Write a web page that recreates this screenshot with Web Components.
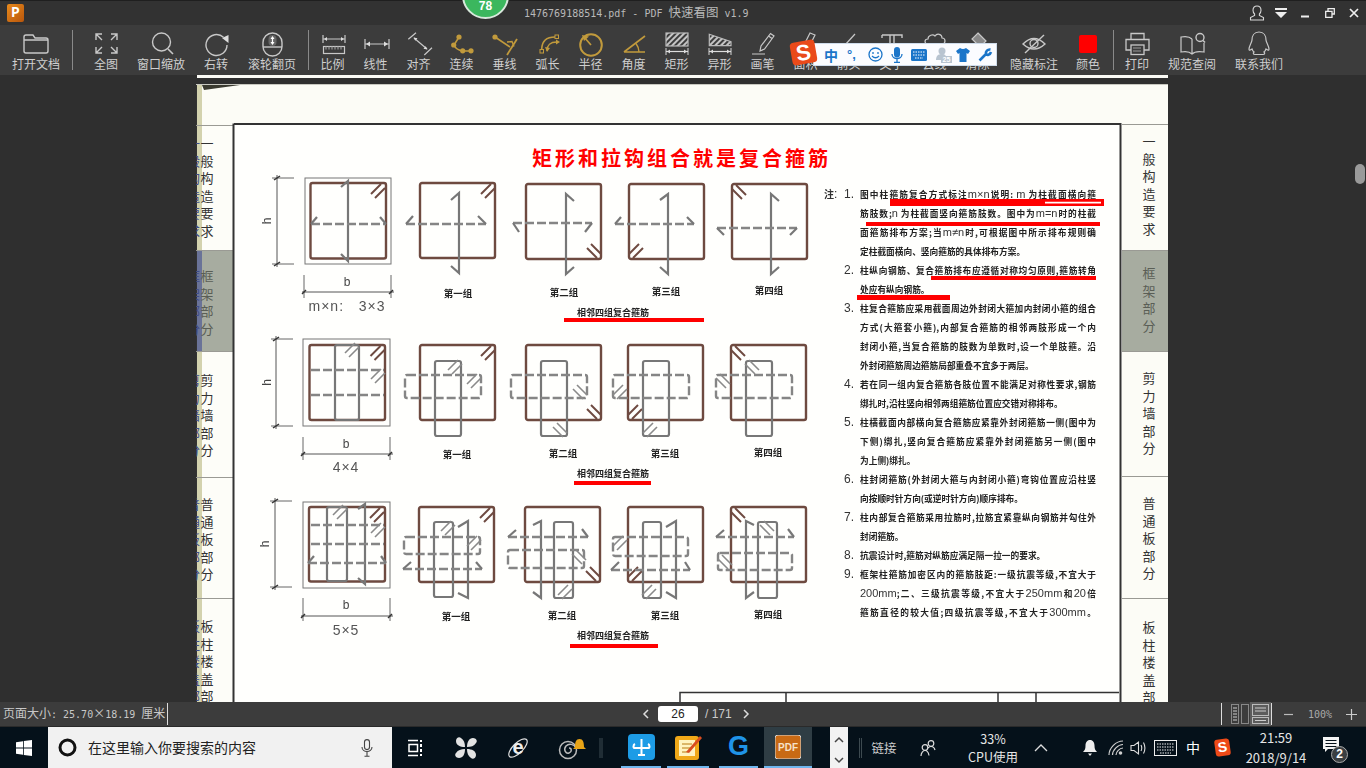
<!DOCTYPE html>
<html lang="zh"><head><meta charset="utf-8"><title>PDF 快速看图</title>
<style>html,body{margin:0;padding:0;background:#2f2f2f;overflow:hidden;font-family:"Noto Sans CJK SC","Liberation Sans",sans-serif}</style>
</head><body>
<x-app>
  <x-titlebar></x-titlebar>
  <x-toolbar></x-toolbar>
  <x-viewer>
    <x-page>
      <x-tabs slot="left" side="left"></x-tabs>
      <x-notes></x-notes>
      <x-tabs slot="right" side="right"></x-tabs>
      <x-drawing slot="over"></x-drawing>
    </x-page>
  </x-viewer>
  <x-statusbar></x-statusbar>
  <x-taskbar></x-taskbar>
  <x-ime slot="over"></x-ime>
  <x-badge slot="over">78</x-badge>
</x-app>
<script>
const CJK='"Noto Sans CJK SC","Liberation Sans",sans-serif';
function def(name,css,html,init){
  customElements.define(name,class extends HTMLElement{
    constructor(){super();this.attachShadow({mode:'open'}).innerHTML=`<style>${css}</style>${typeof html==='function'?html(this):html}`;}
    connectedCallback(){if(init)init(this);}
  });
}
/* generic box with fixed width, centres what it is given */
def('x-cell',`:host{display:flex;align-items:center;justify-content:center;flex:none;box-sizing:border-box;height:100%;color:#e6e6e6}`,`<slot></slot>`,
  el=>{el.style.width=el.getAttribute('w')+'px';if(el.hasAttribute('ml'))el.style.marginLeft=el.getAttribute('ml')+'px';
       if(el.hasAttribute('on'))el.style.borderBottom='2px solid #6fb6ee';if(el.hasAttribute('bg'))el.style.background=el.getAttribute('bg');});

def('x-app',`:host{display:flex;flex-direction:column;width:1366px;height:768px;position:relative;overflow:hidden;background:#2f2f2f}`,`<slot></slot><slot name="over"></slot>`);

def('x-badge',`:host{position:absolute;left:462px;top:-28px;width:47px;height:47px;box-sizing:border-box;border-radius:50%;background:#3bb75e;border:2px solid #d8e8dc;color:#fff;font:700 12px/1 "Liberation Sans",sans-serif;display:flex;align-items:flex-end;justify-content:center;padding-bottom:5px}`,`<slot></slot>`);

/* title bar */
def('x-titlebar',`
:host{display:flex;align-items:center;height:25px;flex:none;background:#323232;border-top:1px solid #1f1f1f;box-sizing:border-box;position:relative}
.logo{width:17px;height:18px;margin-left:7px;border-radius:2px;background:linear-gradient(135deg,#e88a1c,#b8560c);color:#fff;font:700 14px/18px "Liberation Mono",monospace;text-align:center}
.t{margin-left:500px;width:300px;color:#b9b9b9;font:10px/25px "DejaVu Sans Mono",monospace;white-space:pre}
.t b{font:400 12.500px ${CJK}}
.c{margin-left:auto;display:flex;height:24px}
`,`<div class="logo">P</div>
<div class="t">1476769188514.pdf - PDF <b>快速看图</b> v1.9</div>
<div class="c">
<x-cell w="24"><svg width="16" height="16" viewBox="0 0 16 16" fill="none" stroke="#d8d8d8" stroke-width="1.1"><path d="M8 1c-2.6 0-4 1.8-4 4.2 0 1.8.8 3 1.6 3.8v1.4L1.5 12.6V15h13v-2.4l-4.1-2.2V9c.8-.8 1.6-2 1.6-3.8C12 2.8 10.600 1 8 1z"/></svg></x-cell>
<x-cell w="24"><svg width="12" height="12" viewBox="0 0 12 12"><path d="M0 1h12v2H0zM0 5h12L6 11z" fill="#eee"/></svg></x-cell>
<x-cell w="24"><svg width="10" height="10" viewBox="0 0 10 10"><path d="M1 7.500h8v2H1z" fill="#eee"/></svg></x-cell>
<x-cell w="25"><svg width="10" height="10" viewBox="0 0 10 10" fill="none" stroke="#eee" stroke-width="1.300"><path d="M3 3V.700h6.300V6H7"/><path d="M.700 3.300H7v6H.700z"/></svg></x-cell>
<x-cell w="23"><svg width="10" height="10" viewBox="0 0 10 10" stroke="#eee" stroke-width="1.700"><path d="M1 1l8 8M9 1L1 9"/></svg></x-cell>
<div style="width:1px"></div>
</div>`);

/* toolbar */
def('x-tool',`
:host{display:flex;flex-direction:column;align-items:center;flex:none;height:50px;box-sizing:border-box;padding-top:4px;overflow:visible}
::slotted(svg){display:block;width:36px;height:28px;flex:none}
.l{font:12px/16px ${CJK};color:#cfcfcf;white-space:nowrap;margin-top:-1px}
`,`<slot name="icon"></slot><div class="l"><slot></slot></div>`,
el=>{el.style.width=el.getAttribute('w')+'px';});
def('x-sep',`:host{display:block;flex:none;width:1px;height:40px;margin-top:5px;background:#8a8a8a}`,``);

const G='#c19a3c',W='#c8c8c8';
const svg=(b,c=W,w=1.2)=>`<svg slot="icon" viewBox="0 0 36 28" fill="none" stroke="${c}" stroke-width="${w}">${b}</svg>`;
const hatch=`<defs><pattern id="h" width="4" height="4" patternUnits="userSpaceOnUse" patternTransform="rotate(-45)"><rect width="4" height="1.400" fill="#8c8c8c"/></pattern></defs>`;
const dimBar=`<path d="M7 19v7M29 19v7" stroke="#bbb"/><path d="M7 22.500h22" stroke="#ddd"/><path d="M8 22.500l3-2v4zM28 22.500l-3-2v4z" fill="#ddd" stroke="none"/>`;
const TOOLS=[
[72,'打开文档',svg(`<path d="M6 11V8q0-2 2-2h7l2 3h11q2 0 2 2v11q0 2-2 2H8q-2 0-2-2V11h24" stroke-width="1.400"/>`)],
'sep',
[66,'全图',svg(`<g stroke-width="1.400"><path d="M8 11V5h6M8 5l6 6M29 11V5h-6M29 5l-6 6M8 18v6h6M8 24l6-6M29 18v6h-6M29 24l-6-6"/></g>`)],
[44,'窗口缩放',svg(`<circle cx="18.500" cy="13" r="9" stroke-width="1.400"/><path d="M25 20l5 5" stroke-width="1.600"/>`)],
[66,'右转',svg(`<path d="M25.500 8.200A10.500 10.500 0 1 0 29 16" stroke-width="1.400"/><path d="M24 9l6.500-3v8z" fill="#ddd" stroke="none"/>`)],
[46,'滚轮翻页',svg(`<rect x="9" y="4" width="19" height="23" rx="9.500" stroke-width="1.400"/><path d="M9 18h19" stroke-width="1.400"/><rect x="14.500" y="6" width="8" height="11" rx="4" fill="#666" stroke="none"/><path d="M18.500 8v7" stroke="#fff"/><path d="M16.500 10l2-3 2 3zM16.500 13l2 3 2-3z" fill="#fff" stroke="none"/>`)],
'gap13','sep','gap2',
[43,'比例',svg(`<path d="M8 6v8M30 6v8M8 10h22"/><path d="M9 10l3-2v4zM29 10l-3-2v4z" fill="#ddd" stroke="none"/><rect x="8.500" y="17.500" width="21" height="7" stroke-width="1.200"/><path d="M11 17.500v3M14 17.500v3M17 17.500v3M20 17.500v3M23 17.500v3M26 17.500v3" stroke="#999"/>`)],
[43,'线性',svg(`<path d="M7 10v10M31 10v10M7 15h24"/><path d="M8 15l4-2.500v5zM30 15l-4-2.500v5z" fill="#ddd" stroke="none"/>`)],
[43,'对齐',svg(`<path d="M7.300 10.300L15 3.700M23.300 26l7.700-7.300M13 9l13 11"/><path d="M12.500 8.500l4 .8-2.200 2.500zM26.500 20.500l-4-.8 2.200-2.500z" fill="#ddd" stroke="none"/>`)],
[43,'连续',svg(`<path d="M15 8l-5 8q2 5 9 6h8" stroke-width="1.600"/><g fill="${G}" stroke="none"><circle cx="15" cy="8" r="2.600"/><circle cx="9.700" cy="16" r="2.600"/><circle cx="18.700" cy="21.800" r="2.600"/><circle cx="27" cy="21.800" r="2.600"/></g>`,G)],
[43,'垂线',svg(`<path d="M30 10L20 26" stroke-width="1.800"/><path d="M8 8l15 10" stroke-width="1.600"/><path d="M20 13l5-.5 2 5" stroke-width="1.400"/><circle cx="8" cy="8" r="2.600" fill="${G}" stroke="none"/>`,G)],
[43,'弧长',svg(`<path d="M11.700 20C12 11 18 8 25 8" stroke-width="1.600"/><path d="M17 22c0-6 3-9 10-9" stroke-width="1.300"/><path d="M15 18l2 5 3-4zM26 10.500l4 2.500-4 2.500z" fill="${G}" stroke="none"/><rect x="10" y="20.500" width="3.500" height="3.500" stroke-width="1"/><rect x="25" y="6" width="3.500" height="3.500" stroke-width="1"/>`,G)],
[43,'半径',svg(`<circle cx="18" cy="16" r="10.800" stroke-width="2"/><path d="M18 16l-7-8" stroke-width="1.600"/><path d="M9 6l7 1.500-5 4.500z" fill="${G}" stroke="none"/>`,G)],
[43,'角度',svg(`<path d="M8 23h21M8 23L29 7" stroke-width="1.600"/><path d="M20 14.500q3 4 3 8.500" stroke-width="1.400"/>`,G)],
[43,'矩形',svg(`${hatch}<rect x="7" y="4" width="22" height="13" fill="url(#h)" stroke="#bbb"/>${dimBar}`)],
[43,'异形',svg(`<path d="M7.300 5.300L29 12.700v4H7.300z" fill="url(#h2)" stroke="#bbb"/><defs><pattern id="h2" width="4" height="4" patternUnits="userSpaceOnUse" patternTransform="rotate(-45)"><rect width="4" height="1.400" fill="#8c8c8c"/></pattern></defs>${dimBar}`)],
[43,'画笔',svg(`<path d="M7 25h13M15 22l1-5L25.500 4.500l3.500 2.500-9.500 13z"/><path d="M23.500 7l3.500 2.500"/>`)],
[43,'面积',svg(`<path d="M16 16L22 4l5 2-6 12z"/>`)],
[43,'箭头',svg(`<path d="M14 16L24 5"/>`)],
[43,'文字',svg(`<path d="M8 6h20v3M8 6v3M16 6v12M20 6v12" stroke-width="1.400"/>`)],
[43,'云线',svg(`<path d="M11 15c-4 0-4-5 0-5 0-4 5-5 7-3 2-3 7-2 7 2 4 0 4 6 0 6z"/>`)],
[43,'清除',svg(`<path d="M18 4l8 8-6 6-8-8z" fill="#888"/>`)],
'gap1',
[68,'隐藏标注',svg(`<path d="M7 15q11-11 22 0-11 10-22 0z" stroke-width="1.400"/><circle cx="18" cy="14.500" r="4" stroke-width="1.400"/><path d="M28 6L9 24" stroke-width="1.400"/>`)],
[40,'颜色',svg(`<rect x="9" y="6" width="18" height="18" rx="2" fill="#f00" stroke="none"/>`)],
'gap5','sep',
[46,'打印',svg(`<path d="M12 10V4.500h13V10M12 21H7V10.500h23V21h-5" stroke-width="1.300"/><rect x="12" y="16" width="13" height="9.500" stroke-width="1.300"/><path d="M14 19h8M14 22h8" stroke="#999"/>`)],
[64,'规范查阅',svg(`<path d="M18 10c-2-2-6-3-11-2v15c5-1 9 0 11 2 2-2 6-3 12-2V14M18 10v15" stroke-width="1.200"/><circle cx="26" cy="8.500" r="4" stroke-width="1.400"/><path d="M29 11.500l2 2" stroke-width="1.600"/>`)],
[70,'联系我们',svg(`<path d="M18 3c-5 0-7 4-7 8 0 2-3 6-3 9 0 2 1.500 1 3 0 .5 1.500 1 2.500 2 3-1 1-1 2.500 1 2.500h8c2 0 2-1.500 1-2.500 1-.5 1.500-1.500 2-3 1.500 1 3 2 3 0 0-3-3-7-3-9 0-4-2-8-7-8z" stroke-width="1.200"/>`)]
];
def('x-toolbar',`:host{display:flex;flex:none;height:50px;background:#3c3c3c}
.g{flex:none}`,
TOOLS.map(t=>t==='sep'?'<x-sep></x-sep>':typeof t==='string'?`<div class="g" style="width:${t.slice(3)}px"></div>`:`<x-tool w="${t[0]}">${t[2]}${t[1]}</x-tool>`).join(''));

/* viewer */
def('x-viewer',`
:host{display:block;flex:none;height:627px;position:relative;overflow:hidden;background:#2f2f2f;padding-left:196px;box-sizing:border-box}
.strip{height:3px;margin:0 0 6px 1px;width:971px;background:#fbfbf6}
.sb{position:absolute;right:1px;top:89px;width:10px;height:20px;border-radius:5px;background:#9a9a9a}
`,`<div class="strip"></div><slot></slot><div class="sb"></div>`);

def('x-page',`
:host{display:flex;position:relative;width:972px;height:618px;overflow:hidden;background:#fcfcf6}
.mid{flex:none;width:889px;background:linear-gradient(#fcfcf6 40px,#fffffd 40px)}
.l{flex:none;width:37px;background:linear-gradient(90deg,#333 0 1px,#d3d2ae 1px 6px,transparent 6px)}
.r{flex:none;width:46px}
.o{position:absolute;inset:0;z-index:2;pointer-events:none}
`,`<div class="l"><slot name="left"></slot></div><div class="mid"><slot></slot></div><div class="r"><slot name="right"></slot></div><div class="o"><slot name="over"></slot></div>`);

const TABS={
 right:[[40,126,10,'一般构造要求'],[0,101,16,'框架部分',1],[0,125,20,'剪力墙部分'],[0,122,19.500,'普通板部分'],[0,110,21.500,'板柱楼盖部']],
 left:[[41,125,10.500,'一般构造要求'],[0,101,18.500,'框架部分',1],[0,126,21.500,'剪力墙部分'],[0,121,19.500,'普通板部分'],[0,110,20.500,'板柱楼盖部']]
};
def('x-tab',`
:host{display:block;position:relative;box-sizing:border-box;overflow:hidden;border-top:1px solid #9a9a94;font:13px/13px ${CJK};color:#333}
.t{writing-mode:vertical-rl;letter-spacing:4.500px;white-space:nowrap;display:block;position:relative}
.g{position:absolute;left:-9px;color:#3e4b85}
`,`<span class="g" part="g"></span><span class="t"><slot></slot></span>`);
customElements.define('x-tabs',class extends HTMLElement{
  constructor(){super();this.attachShadow({mode:'open'});}
  connectedCallback(){
    const side=this.getAttribute('side');
    const s=document.createElement('style');
    s.textContent=`:host{display:block;width:100%}
    x-tab.g{background:#a7aca0;color:#5a5e56}
    x-tab.lf{background:linear-gradient(90deg,#333 0 1px,#d3d2ae 1px 6px,#fdfdf8 6px)}
    x-tab.lf.g{background:linear-gradient(90deg,#333 0 1px,#6a7398 1px 6px,#a7aca0 6px)}`;
    this.shadowRoot.append(s);
    TABS[side].forEach(([mt,h,pad,txt,grey])=>{
      const t=document.createElement('x-tab');
      t.textContent=txt;
      t.style.height=h+'px';
      if(mt)t.style.marginTop=mt+'px';
      if(grey)t.classList.add('g');
      if(side==='left')t.classList.add('lf');
      const inner=t.shadowRoot.querySelector('.t');
      inner.style.paddingTop=pad+'px';
      if(side==='left'){
        inner.style.paddingLeft='4.500px';
        const g=t.shadowRoot.querySelector('.g');g.textContent=txt;g.style.top=pad+'px';
        g.style.writingMode='vertical-rl';g.style.letterSpacing='4.500px';g.style.whiteSpace='nowrap';
      }else{
        inner.style.paddingLeft='20.500px';
        t.shadowRoot.querySelector('.g').remove();
      }
      this.shadowRoot.append(t);
    });
  }
});

/* notes */
const NOTES=[
['1.',['图中柱箍筋复合方式标注m×n说明:   m 为柱截面横向箍','筋肢数;n 为柱截面竖向箍筋肢数。图中为m=n时的柱截','面箍筋排布方案;当m≠n时,可根据图中所示排布规则确','定柱截面横向、竖向箍筋的具体排布方案。']],
['2.',['柱纵向钢筋、复合箍筋排布应遵循对称均匀原则,箍筋转角','处应有纵向钢筋。']],
['3.',['柱复合箍筋应采用截面周边外封闭大箍加内封闭小箍的组合','方式(大箍套小箍),内部复合箍筋的相邻两肢形成一个内','封闭小箍,当复合箍筋的肢数为单数时,设一个单肢箍。沿','外封闭箍筋周边箍筋局部重叠不宜多于两层。']],
['4.',['若在同一组内复合箍筋各肢位置不能满足对称性要求,钢筋','绑扎时,沿柱竖向相邻两组箍筋位置应交错对称排布。']],
['5.',['柱横截面内部横向复合箍筋应紧靠外封闭箍筋一侧(图中为','下侧)绑扎,竖向复合箍筋应紧靠外封闭箍筋另一侧(图中','为上侧)绑扎。']],
['6.',['柱封闭箍筋(外封闭大箍与内封闭小箍)弯钩位置应沿柱竖','向按顺时针方向(或逆时针方向)顺序排布。']],
['7.',['柱内部复合箍筋采用拉筋时,拉筋宜紧靠纵向钢筋并勾住外','封闭箍筋。']],
['8.',['抗震设计时,箍筋对纵筋应满足隔一拉一的要求。']],
['9.',['框架柱箍筋加密区内的箍筋肢距:一级抗震等级,不宜大于','200mm;二、三级抗震等级,不宜大于250mm和20倍','箍筋直径的较大值;四级抗震等级,不宜大于300mm。']]
];
const lat=s=>s.replace(/[A-Za-z0-9=≠×]+/g,m=>`<i>${m}</i>`);
def('x-notes',`
:host{display:block;margin:100.500px 0 0 591px;width:272px;font:700 8.700px/19px ${CJK};color:#222;filter:blur(.25px)}
.n{display:grid;grid-template-columns:36px 236px}
.k{font:12px/19px "Liberation Sans",sans-serif;color:#333;text-align:right;padding-right:6px;white-space:pre}
.k b{font:700 10px ${CJK};}
.ln{height:19px;text-align:justify;text-align-last:justify;white-space:normal}
.ln.e{text-align-last:left}
i{font:400 11px "Liberation Sans",sans-serif;color:#333}
`,NOTES.map((n,ni)=>`<div class="n"><div class="k">${ni===0?'<b>注</b>:  ':''}${n[0]}</div><div>${n[1].map((l,i)=>{const last=i===n[1].length-1&&ni!==8;return `<div class="ln${last?' e':''}">${lat(l)}</div>`}).join('')}</div></div>`).join(''));

/* the scanned drawing: a free canvas in page coordinates */
const BR='#6e4a40',GY='#777',DS='#858585';
const line=(x1,y1,x2,y2,c='#555',w=1)=>`<path d="M${x1} ${y1}L${x2} ${y2}" stroke="${c}" stroke-width="${w}" fill="none"/>`;
const dbl=(cx,cy,slash,c=BR,w=2)=>{const d=slash==='/'?[1,-1]:[1,1],n=slash==='/'?[1,1]:[1,-1],l=5,o=2;
  return [1,-1].map(s=>line(cx-d[0]*l+n[0]*o*s,cy-d[1]*l+n[1]*o*s,cx+d[0]*l+n[0]*o*s,cy+d[1]*l+n[1]*o*s,c,w)).join('');};
const corner=w=>({TR:dbl(68,8,'/'),TL:dbl(7,8,'\\'),BR:dbl(68,67,'\\'),BL:dbl(7,67,'/')}[w]);
const vTie=(x,t,b,h1,h2)=>`<path d="M${h1} L${x} ${t} L${x} ${b} L${h2}" fill="none" stroke="${GY}" stroke-width="2.200"/>`;
const hTie=(y,l,r,h1,h2)=>`<path d="M${l} ${y}L${r} ${y}" fill="none" stroke="${DS}" stroke-width="2.600" stroke-dasharray="9 3"/>`+line(l,y,h1[0],h1[1],GY,2.200)+line(r,y,h2[0],h2[1],GY,2.200);
const vRect=(x,y,w,h)=>`<rect x="${x}" y="${y}" width="${w}" height="${h}" rx="2" fill="none" stroke="${GY}" stroke-width="2.200"/>`;
const dRect=(x,y,w,h)=>`<rect x="${x}" y="${y}" width="${w}" height="${h}" rx="2" fill="none" stroke="${DS}" stroke-width="2.400" stroke-dasharray="9 3"/>`;
const lh=(x,y,s)=>dbl(x,y,s,'#8a8a8a',1.600);
const sq=(ox,oy,c,body)=>`<g transform="translate(${ox} ${oy})"><rect width="75" height="75" rx="2" fill="none" stroke="${BR}" stroke-width="2.400"/>${corner(c)}${body}</g>`;
const lbl=(x,y,t,fs=9.500)=>`<text x="${x}" y="${y}" text-anchor="middle" dominant-baseline="central" font-size="${fs}" font-weight="700" fill="#222" font-family='"Noto Sans CJK SC",sans-serif'>${t}</text>`;
const dim=(vx,t,b,ox0,ox1,hy,by0,by1,hx,bx,byt,by,big,bigY)=>
  line(vx,t-3,vx,b+3)+line(vx-5,t,vx+17,t,'#666')+line(vx-5,b,vx+17,b,'#666')+line(vx-3,t+2,vx+3,t-2,'#333',1.500)+line(vx-3,b+2,vx+3,b-2,'#333',1.500)
  +line(ox0-2,hy,ox1+3,hy)+line(ox0,by0,ox0,by1,'#666')+line(ox1,by0,ox1,by1,'#666')+line(ox0-2,hy+2,ox0+2,hy-2,'#333',1.500)+line(ox1-2,hy+2,ox1+2,hy-2,'#333',1.500)
  +`<text x="${hx}" y="${(t+b)/2}" text-anchor="middle" dominant-baseline="central" transform="rotate(-90 ${hx} ${(t+b)/2})" font-size="12" fill="#444" font-family="Liberation Sans">h</text>`
  +`<text x="${bx}" y="${byt}" text-anchor="middle" dominant-baseline="central" font-size="12" fill="#444" font-family="Liberation Sans">b</text>`
  +`<text x="${bx}" y="${bigY}" text-anchor="middle" dominant-baseline="central" font-size="14" letter-spacing="1" fill="#555" font-family='"Liberation Sans","Noto Sans CJK SC",sans-serif'>${big}</text>`;

const row1=
  sq(420,183,'TR',vTie(39,10,90,'31 17','31 83')+hTie(41,-14,66,[-7,33],[58,33]))+
  sq(526,184,'BR',vTie(40,10,90,'48 17','48 83')+hTie(39,-13,66,[-7,48],[59,48]))+
  sq(629,184,'BL',vTie(39,10,90,'31 16','31 83')+hTie(40,-14,65,[-8,33],[58,33]))+
  sq(732,184,'TL',vTie(39,10,90,'47 17','47 83')+hTie(44,-15,65,[-8,51],[58,51]));
const r2=(x,c,hk)=>sq(x,345,c,vRect(15,16,26,75)+dRect(-15,30,76,23)+hk);
const row2=
  r2(420,'TR',lh(35,22,'/')+lh(54,36,'/'))+
  r2(526,'BR',lh(34,85,'\\')+lh(54,47,'\\'))+
  r2(628,'BL',lh(22,85,'/')+lh(-8,47,'/'))+
  r2(731,'TL',lh(21,22,'\\')+lh(-8,36,'\\'));
const row3=
  sq(419,507,'TR',vRect(15,15,19,75)+vTie(49,14,91,'39 20','39 86')+dRect(-15,30,76,17)+hTie(62,-16,63,[-8,55],[57,55])+lh(29,21,'/')+lh(55,36,'/'))+
  sq(525,507,'BR',vTie(16,14,91,'8 18','8 85')+vRect(29,15,19,76)+hTie(30,-17,63,[-9,23],[57,22])+dRect(-17,43,76,18)+lh(54,50,'\\')+lh(40,85,'/'))+
  sq(628,507,'BL',vRect(15,15,18,76)+vTie(48,14,91,'38 20','38 85')+dRect(-15,30,75,19)+hTie(63,-17,62,[-9,55],[57,55])+lh(-8,36,'/')+lh(21,85,'/'))+
  sq(731,507,'TL',vTie(15,14,91,'23 18','23 85')+vRect(27,15,19,76)+hTie(30,-15,63,[-7,23],[57,22])+dRect(-13,46,74,17)+lh(-6,55,'\\')+lh(36,21,'\\'));
const mains=
  `<rect x="305" y="178" width="86" height="86" fill="none" stroke="#777"/>`+
  `<rect x="310.500" y="183" width="75.500" height="75.500" rx="2" fill="none" stroke="${BR}" stroke-width="2.400"/>`+
  `<g transform="translate(310 183)">${corner('TR')}</g>`+
  vTie(348,181,261,'341 187','341 254')+hTie(224,311,386,[317,217],[380,217])+
  `<rect x="303" y="339" width="87" height="87" fill="none" stroke="#777"/>`+
  `<rect x="309.500" y="345" width="75.500" height="75" rx="2" fill="none" stroke="${BR}" stroke-width="2.400"/>`+
  `<g transform="translate(309.500 345)">${corner('TR')}</g>`+
  vRect(335,345,24,75)+hTie(370,311,384,[311,370],[384,370])+hTie(395,311,384,[311,395],[384,395])+lh(352,350,'/')+lh(378,376,'/')+
  `<rect x="303" y="502" width="87" height="86" fill="none" stroke="#777"/>`+
  `<rect x="309" y="507" width="76" height="74.500" rx="2" fill="none" stroke="${BR}" stroke-width="2.400"/>`+
  `<g transform="translate(309 507)">${corner('TR')}</g>`+
  vRect(327,507,20,74)+vTie(365,504,584,'358 509','358 578')+hTie(525,311,384,[311,525],[384,525])+hTie(544,311,384,[311,544],[384,544])+hTie(563,308,386,[314,556],[381,556])+lh(340,512,'/')+lh(378,530,'/');
const REDS=[[564,318,140,4],[574,481,77,4],[570,644,88,4],[866,222,234,4],[931,276,165,4],[857,295,93,5]];
def('x-drawing',`:host{display:block;position:absolute;inset:0}svg{display:block;width:972px;height:618px}.b{filter:blur(.4px)}`,
`<svg viewBox="196 84 972 618">
<g class="b">
<path d="M202 85L240 85L204 90z" fill="#3a3a30"/><path d="M196 84.500H1168" stroke="#c8c8c0"/>
<path d="M234 124H1121.500M233.500 123.500V702M1120.500 124V702" fill="none" stroke="#333" stroke-width="2"/>
<path d="M680 702V692.500H1119M786 692V702M998 692V702M1036 692V702" fill="none" stroke="#333" stroke-width="1.500"/>
${row1}${row2}${row3}${mains}
${dim(277,178,264,304,391,292,275,298,267,347,282,0,'m×n:&#160;&#160;&#160;3×3',306)}
${dim(276,339,426,303,390,454,437,460,267,346,444,0,'4×4',467)}
${dim(275,501,587,303,390,616,598,621,265,346,605,0,'5×5',630)}
${lbl(458,293,'第一组')}${lbl(564,292,'第二组')}${lbl(666,291,'第三组')}${lbl(769,290,'第四组')}
${lbl(457,454,'第一组')}${lbl(563,453,'第二组')}${lbl(665,453,'第三组')}${lbl(768,452,'第四组')}
${lbl(456,616,'第一组')}${lbl(562,615,'第二组')}${lbl(665,615,'第三组')}${lbl(768,614,'第四组')}
${lbl(613,312,'相邻四组复合箍筋',9)}${lbl(613,473,'相邻四组复合箍筋',9)}${lbl(613,635,'相邻四组复合箍筋',9)}
</g>
<text x="532" y="157" dominant-baseline="central" font-size="20" font-weight="700" letter-spacing="3" fill="#f00" font-family='"Noto Sans CJK SC",sans-serif'>矩形和拉钩组合就是复合箍筋</text>
<path d="M890 199h214v7H890zM1045 201.800v1.800h56v-1.800z" fill="#f00" fill-rule="evenodd"/>
${REDS.map(r=>`<rect x="${r[0]}" y="${r[1]}" width="${r[2]}" height="${r[3]}" fill="#f00"/>`).join('')}
</svg>`);

/* status bar */
def('x-statusbar',`
:host{display:flex;flex:none;height:25px;background:#3c3c3c;color:#c8c8c8;font:10px/25px "DejaVu Sans Mono",monospace;white-space:pre;align-items:center;overflow:hidden;border-bottom:1px solid #2a2a2a;box-sizing:border-box}
b{font:400 12px ${CJK}}
.s{width:164px;padding-left:3px;box-sizing:content-box;height:24px;flex:none}
.d{width:1px;height:22px;background:#ddd;flex:none}
.in{width:40px;height:16px;background:#fff;border-radius:3px;color:#222;font:12px/16px "Liberation Sans",sans-serif;text-align:center;margin:0 6px 0 6px;flex:none}
.p{display:flex;align-items:center;margin-left:472px;height:24px;flex:none}
.r{display:flex;align-items:center;margin-left:auto;width:145px;height:24px;flex:none}
.pg{font:12px "Liberation Sans",sans-serif;color:#ccc;flex:none}
.sel{background:#5c5c5c;width:21px;height:24px;display:flex;align-items:center;justify-content:center;flex:none}
.o{width:21px;display:flex;align-items:center;justify-content:center;height:24px;flex:none}
.z{font:10px "DejaVu Sans Mono",monospace;color:#aaa;width:36px;text-align:center;flex:none}
`,`<div class="s"><b>页面大小</b>: 25.70<b>×</b>18.19 <b>厘米</b></div><div class="d"></div>
<div class="p">
<svg width="12" height="12" viewBox="0 0 12 12" fill="none" stroke="#ddd" stroke-width="1.500"><path d="M8 2L4 6l4 4"/></svg>
<div class="in">26</div>
<div class="pg" style="width:35px;padding-left:1px">/ 171</div>
<svg width="12" height="12" viewBox="0 0 12 12" fill="none" stroke="#ddd" stroke-width="1.500"><path d="M4 2l4 4-4 4"/></svg>
</div>
<div class="r"><div class="d"></div>
<div class="o" style="margin-left:7px;width:21px"><svg width="18" height="20" viewBox="0 0 18 20" fill="none" stroke="#888"><rect x=".5" y=".5" width="7" height="19"/><rect x="10.500" y=".5" width="7" height="19"/><path d="M2 4h4M2 7h4M2 10h4M2 13h4M2 16h4" stroke="#ccc"/></svg></div>
<div class="sel"><svg width="17" height="20" viewBox="0 0 17 20" fill="none" stroke="#bbb"><rect x=".5" y=".5" width="16" height="11"/><rect x=".5" y="13.500" width="16" height="6"/><path d="M3 4h11M3 7h11M3 16.500h11" stroke="#ccc"/></svg></div>
<div class="d"></div>
<div class="o" style="margin-left:6px"><svg width="11" height="11" stroke="#bbb" stroke-width="1.200"><path d="M1 5.500h9"/></svg></div>
<div class="z" style="margin-left:3px">100%</div>
<div class="o" style="margin-left:3px"><svg width="11" height="11" stroke="#ccc" stroke-width="1.200"><path d="M0 5.500h11M5.500 0v11"/></svg></div>
</div>`);

/* task bar */
def('x-taskbar',`
:host{display:flex;flex:none;height:41px;background:#05111a;font:13px/1.2 ${CJK};color:#e6e6e6;overflow:hidden}
.se{width:344px;background:#f1f1f1;display:flex;align-items:center;flex:none;height:100%;color:#222;font-size:14px}
.se span{margin-left:11px;white-space:nowrap}
.up{width:18px;background:#f2f2f2;flex:none;margin-left:18px;display:flex;flex-direction:column;justify-content:space-between;align-items:center;padding:9px 0 4px;box-sizing:border-box}
.cpu{display:flex;flex-direction:column;align-items:center;line-height:18px;font-size:12.500px;text-align:center}
.cl{display:flex;flex-direction:column;align-items:center;line-height:20px;font-size:13px}
`,`
<x-cell w="48"><svg width="16" height="16" viewBox="0 0 16 16" fill="#fff"><path d="M0 2.200L7 1.200V7.500H0zM7.800 1L16 0V7.500H7.800zM0 8.400H7V14.800L0 13.800zM7.800 8.400H16V16L7.800 15z"/></svg></x-cell>
<div class="se"><svg style="margin-left:10px;flex:none" width="19" height="19" viewBox="0 0 19 19" fill="none" stroke="#111" stroke-width="3"><circle cx="9.500" cy="9.500" r="7.500"/></svg><span>在这里输入你要搜索的内容</span>
<svg style="margin-left:105px;flex:none" width="12" height="18" viewBox="0 0 12 18" fill="none" stroke="#444" stroke-width="1.100"><rect x="3.500" y=".6" width="5" height="10" rx="2.500"/><path d="M1 8c0 6 10 6 10 0M6 13v4M3.500 17.300h5"/></svg></div>
<x-cell w="48"><svg width="16" height="18" viewBox="0 0 16 18" fill="none" stroke="#fff" stroke-width="1.500"><path d="M0 1.500h10M0 16.500h10M1 5.500h8.500v7H1z"/><path d="M13 1v2M13 5v3M13 10v3M13 15v2" stroke-width="2"/></svg></x-cell>
<x-cell w="52"><svg width="24" height="24" viewBox="0 0 24 24" fill="#e3e3e3"><path d="M11 11C6 11 2 9 2 5c0-3 3-5 5-3 3 2 4 5 4 9zM13 11c0-5 2-9 6-9 3 0 5 3 3 5-2 3-5 4-9 4zM13 13c5 0 9 2 9 6 0 3-3 5-5 3-3-2-4-5-4-9zM11 13c0 5-2 9-6 9-3 0-5-3-3-5 2-3 5-4 9-4z"/></svg></x-cell>
<x-cell w="52"><svg width="24" height="26" viewBox="0 0 24 26" fill="none"><ellipse cx="12" cy="13" rx="12" ry="5" transform="rotate(-45 12 13)" stroke="#ddd" stroke-width="1.200"/><text x="12" y="19" text-anchor="middle" font-size="20" font-weight="700" fill="#eee" font-family="Liberation Sans">e</text></svg></x-cell>
<x-cell w="54"><svg width="34" height="30" viewBox="0 0 34 30" fill="none" stroke="#bbb" stroke-width="1.500"><circle cx="14" cy="17" r="8.500"/><path d="M22 15c-2-4-7-5-10-2-3 4 0 8 3 7 3-1 3-5 0-5"/><path d="M21 14c0-5 1-8 4.500-8s4.500 3 4.500 8l2 2H19z" fill="#e8a417" stroke="none"/></svg></x-cell>
<x-cell w="6"><svg width="4" height="20"><path d="M1 0v20M3 0v20" stroke="#3d4a50"/></svg></x-cell>
<x-cell w="40" ml="17" on><svg width="27" height="26" viewBox="0 0 27 26"><rect width="27" height="26" rx="4" fill="#1d9ce6"/><path d="M13.500 5v16M7 10c-2 1-2 4 0 4h13c2 0 2-3 0-4M10 21h7" fill="none" stroke="#fff" stroke-width="2"/></svg></x-cell>
<x-cell w="42" ml="6" on><svg width="28" height="26" viewBox="0 0 28 26"><rect x="1" y="2" width="24" height="24" rx="3" fill="#f0a818"/><rect x="5" y="6" width="16" height="16" fill="#fff3c0"/><path d="M8 10h10M8 14h10M8 18h6" stroke="#b87a10"/><path d="M12 18L26 2l2 2L15 19z" fill="#d94d20"/></svg></x-cell>
<x-cell w="39" ml="10" on><span style="font:900 27px/1 'Liberation Sans',sans-serif;color:#1f94e8">G</span></x-cell>
<x-cell w="48" ml="6" on bg="#2f3d44"><svg width="26" height="24" viewBox="0 0 26 24"><rect width="26" height="24" rx="3" fill="#c96a14" stroke="#d8d8d8"/><text x="13" y="16" text-anchor="middle" font-size="10" font-weight="700" fill="#f6e2c8" font-family="Liberation Sans">PDF</text></svg></x-cell>
<div class="up"><svg width="10" height="7" fill="none" stroke="#444" stroke-width="1.500"><path d="M1 6l4-4 4 4"/></svg><svg width="10" height="7" fill="none" stroke="#444" stroke-width="1.500"><path d="M1 1l4 4 4-4"/></svg></div>
<x-cell w="4" ml="10"><svg width="3" height="20"><path d="M.5 0v20M2.500 0v20" stroke="#3d4a50"/></svg></x-cell>
<x-cell w="38" ml="3" style="font-size:12.500px;color:#ccc">链接</x-cell>
<x-cell w="28" ml="11"><svg width="16" height="18" viewBox="0 0 16 18" fill="none" stroke="#ddd" stroke-width="1.200"><circle cx="11" cy="4.500" r="2.800"/><circle cx="5" cy="8.500" r="2.800"/><path d="M1 17c0-3 2-5.500 4-5.500s3.500 2 4 5M8 9c1-1 2-1.500 3-1.500 2 0 3.500 1.500 4 3.500"/></svg></x-cell>
<x-cell w="66" ml="18"><div class="cpu"><span>33%</span><span>CPU使用</span></div></x-cell>
<x-cell w="22" ml="4"><svg width="14" height="8" fill="none" stroke="#ddd" stroke-width="1.300"><path d="M1 7l6-6 6 6"/></svg></x-cell>
<x-cell w="24" ml="26"><svg width="14" height="16" viewBox="0 0 14 16" fill="#eee"><path d="M7 0c3 0 4.500 2.500 4.500 5.500s.5 4.500 2.500 6.500H0c2-2 2.500-3.500 2.500-6.500S4 0 7 0zM5 13.500h4L7 16z"/></svg></x-cell>
<x-cell w="24" ml="2"><svg width="16" height="16" viewBox="0 0 16 16" fill="none" stroke="#cfcfcf" stroke-width="1.200"><path d="M1 15C1 8 8 1 15 1M4.500 15c0-5 5.500-10.500 10.500-10.500M8 15c0-3 3.500-7 7-7"/><circle cx="12.500" cy="13" r="1.800" fill="#cfcfcf" stroke="none"/></svg></x-cell>
<x-cell w="20"><svg width="16" height="16" viewBox="0 0 16 16" fill="none" stroke="#ddd" stroke-width="1.100"><path d="M1 5.500h3L8.500 2v12L4 10.500H1zM11 5c1 2 1 4 0 6M13.500 2.500c1.800 3.500 1.800 7.500 0 11"/></svg></x-cell>
<x-cell w="30" ml="2"><svg width="23" height="16" viewBox="0 0 23 16" fill="none" stroke="#eee"><rect x=".5" y=".5" width="22" height="15"/><path d="M3 4h17M3 7h17M3 10h17M6 13h11" stroke-dasharray="1.500 1"/></svg></x-cell>
<x-cell w="20" ml="3" style="font-size:14px;color:#fff">中</x-cell>
<x-cell w="22" ml="8"><span style="display:inline-block;width:15px;height:17px;background:#ee4a18;border-radius:3px;color:#fff;font:700 14px/17px 'Liberation Sans',sans-serif;text-align:center;transform:rotate(-8deg)">S</span></x-cell>
<x-cell w="72" ml="7"><div class="cl"><span>21:59</span><span>2018/9/14</span></div></x-cell>
<x-cell w="34" ml="4"><div style="position:relative;width:18px;height:22px"><svg width="16" height="16" viewBox="0 0 16 16" fill="#f4f4f4" stroke="#05111a" style="position:absolute;left:-1px;top:0"><path d="M0 0h16v12H5l-3 3v-3H0z" stroke="none"/><path d="M2.500 3.500h11M2.500 6.500h11M2.500 9.500h11"/></svg><span style="position:absolute;left:7px;top:9px;width:15px;height:15px;line-height:15px;border-radius:50%;background:#3a3f42;border:1px solid #aaa;color:#fff;font:700 12px/15px 'Liberation Sans',sans-serif;text-align:center">2</span></div></x-cell>
`);

/* IME floating bar */
def('x-ime',`
:host{position:absolute;left:790px;top:40px;width:207px;height:27px;display:block;color:#1b75c9}
.bar{position:absolute;left:23px;right:0;top:3px;height:23px;background:#fbfcff;border:1px solid #cfdceb;box-sizing:border-box;display:flex;align-items:center}
.s{position:absolute;left:1px;top:1px;width:25px;height:23px;background:#ea4a1a;border-radius:4px;transform:rotate(-10deg);color:#fff;font:700 22px/23px "Liberation Sans",sans-serif;text-align:center}
.m{font:700 14px/1 ${CJK};margin-left:10px;width:15px}
.p{font:700 13px/1 "Liberation Sans",sans-serif;margin-left:8px;width:14px}
x-cell{height:21px}
`,`<div class="bar"><span class="m">中</span><span class="p">°,</span>
<x-cell w="16" ml="6"><svg width="15" height="15" viewBox="0 0 15 15" fill="none" stroke="#1b75c9" stroke-width="1.300"><circle cx="7.500" cy="7.500" r="6.500"/><path d="M4 9q3.500 3.500 7 0"/><path d="M5 5v2M10 5v2"/></svg></x-cell>
<x-cell w="14" ml="7"><svg width="12" height="16" viewBox="0 0 12 16" fill="#1b75c9"><rect x="3" y="0" width="6" height="10.500" rx="3"/><path d="M1 7c0 6 10 6 10 0M6 12v3M3 15.300h6" fill="none" stroke="#1b75c9" stroke-width="1.300"/></svg></x-cell>
<x-cell w="17" ml="6"><svg width="16" height="12" viewBox="0 0 16 12"><rect width="16" height="12" rx="1.500" fill="#1b75c9"/><path d="M2 3h12M2 6h12M4 9h8" stroke="#fff" stroke-dasharray="1.500 1"/></svg></x-cell>
<x-cell w="18" ml="8"><svg width="16" height="16" viewBox="0 0 16 16"><circle cx="6" cy="4" r="3.500" fill="#b8c4d0"/><path d="M0 13c0-4 2-6 6-6s4 2 4 6z" fill="#b8c4d0"/><rect x="5" y="9" width="11" height="7" fill="#b8c4d0"/><text x="10.500" y="15" text-anchor="middle" font-size="7" font-weight="700" fill="#fff" font-family="Liberation Sans">25</text></svg></x-cell>
<x-cell w="14" ml="3"><svg width="14" height="14" viewBox="0 0 14 14" fill="#1b75c9"><path d="M4 0q3 2 6 0l4 3-2 3-1.500-1V14h-7V5L2 6 0 3z"/></svg></x-cell>
<x-cell w="15" ml="8"><svg width="15" height="15" viewBox="0 0 15 15" fill="none" stroke="#1b75c9" stroke-width="2.600"><path d="M1.500 13.500L8 7c-.5-2.500 1.500-5 4.500-4.500M8 7c1 1.500 4 1 5-2"/></svg></x-cell>
</div><div class="s">S</div>`);
</script>
</body></html>
